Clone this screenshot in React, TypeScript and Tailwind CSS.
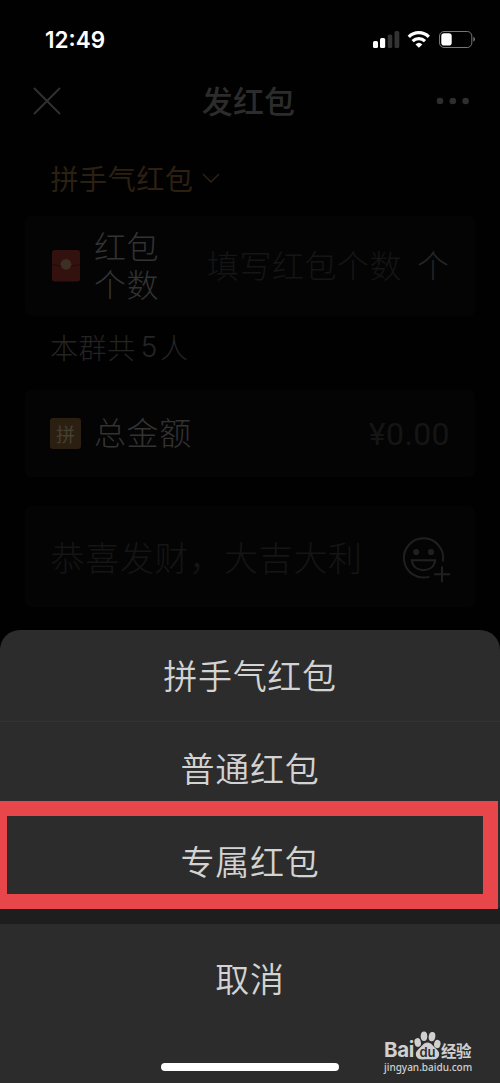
import React from "react";

function StatusBar() {
  return (
    <div className="flex h-[78px] items-center justify-between pl-[45px] pr-[25px]">
      <div className="pt-[2px] font-['Inter'] text-[22.5px] font-semibold leading-none text-white">12:49</div>
      <svg className="shrink-0" width="103" height="20" viewBox="372 29 103 20" fill="none">
        <rect x="373" y="41" width="5" height="7" rx="1.5" fill="#fff" />
        <rect x="380" y="38" width="5.2" height="10" rx="1.5" fill="#fff" />
        <rect x="387.7" y="34.5" width="4.6" height="13.5" rx="1.5" fill="#333" />
        <rect x="394.5" y="31" width="4.8" height="17" rx="1.5" fill="#333" />
        <path d="M408.8 36.8a14.2 14.2 0 0 1 20 0" stroke="#fff" strokeWidth="3.3" />
        <path d="M412.6 41.2a9 9 0 0 1 12.4 0" stroke="#fff" strokeWidth="3.2" />
        <path d="M415.5 44.4a5 5 0 0 1 6.8 0L418.9 47.8Z" fill="#fff" />
        <rect x="439.5" y="31.5" width="32.3" height="16" rx="4.5" stroke="#777" strokeWidth="1" />
        <rect x="441.3" y="33.2" width="10.4" height="12.4" rx="2.8" fill="#fff" />
        <path d="M473.3 36.8q1.7.8 1.7 2.5t-1.7 2.5Z" fill="#777" />
      </svg>
    </div>
  );
}

function NavBar() {
  return (
    <div className="flex h-[46px] items-center justify-between pl-[33px] pr-[30px]">
      <svg width="28" height="28" viewBox="0 0 28 28" stroke="#303030" strokeWidth="2">
        <path d="M1 1L27 27M27 1L1 27" />
      </svg>
      <h1 className="pb-[3px] text-[31px] font-medium leading-none tracking-[0.2px] text-[#2c2c2c]">发红包</h1>
      <svg width="34" height="8" viewBox="0 0 34 8" fill="#2e2e2e">
        <circle cx="4" cy="4" r="3.3" />
        <circle cx="16.8" cy="4" r="3.3" />
        <circle cx="29.6" cy="4" r="3.3" />
      </svg>
    </div>
  );
}

function Packet() {
  return (
    <svg className="shrink-0" width="28" height="32" viewBox="0 0 28 32">
      <rect width="28" height="31.5" rx="2.5" fill="#32110e" />
      <path d="M0 14.5Q14 18 28 14.5" stroke="#230b09" fill="none" />
      <circle cx="14" cy="14.3" r="5.4" fill="#3c3024" />
    </svg>
  );
}

function Smiley() {
  return (
    <svg className="mt-[6px]" width="48" height="46" viewBox="402 537 48 46" fill="none" stroke="#202020" strokeWidth="2">
      <path d="M442.8 561.5A19.6 19.6 0 1 0 429.5 576.6" />
      <circle cx="416.2" cy="552" r="3.1" fill="#202020" stroke="none" />
      <circle cx="431" cy="552" r="3.1" fill="#202020" stroke="none" />
      <path d="M411.8 560.2H435.2C434.5 566.5 429.8 570.2 423.5 570.2S412.5 566.5 411.8 560.2Z" />
      <path d="M442 566.5V582.3M434 574.3H450" />
    </svg>
  );
}

function Watermark() {
  return (
    <div className="absolute bottom-[9px] left-[384px] flex w-[92px] flex-col text-[#d0d0d0]">
      <div className="flex h-[29px] items-end">
        <span className="w-[30px] font-['Inter'] text-[20.5px] font-bold leading-[20px] tracking-[-0.3px]">Bai</span>
        <svg className="shrink-0" width="27" height="29" viewBox="0 0 27 29" fill="#d0d0d0">
          <ellipse cx="3.7" cy="11.5" rx="3.2" ry="4.4" transform="rotate(-10 3.7 11.5)" />
          <ellipse cx="10" cy="5.3" rx="3.3" ry="4.8" />
          <ellipse cx="18" cy="5.6" rx="3.3" ry="4.7" transform="rotate(10 18 5.6)" />
          <ellipse cx="23.3" cy="13" rx="3.2" ry="4.2" transform="rotate(12 23.3 13)" />
          <path d="M13.5 11.5C9.6 11.5 8 15.3 4.9 17.7C1.7 20.5 1.2 23.2 2.5 25.8C4.7 29.5 9.8 28.2 13.5 28.2S22.3 29.5 24.5 25.8C25.8 23.2 25.3 20.5 22.1 17.7C19 15.3 17.4 11.5 13.5 11.5Z" />
          <text x="13.5" y="26" textAnchor="middle" fontFamily="Inter" fontSize="13" fontWeight="600" fill="#2c2c2c">du</text>
        </svg>
        <span className="whitespace-nowrap text-[15.5px] font-bold leading-[20px] tracking-[-0.5px]">经验</span>
      </div>
      <span className="whitespace-nowrap font-['Noto_Sans'] text-[10px] font-medium leading-[14px]">jingyan.baidu.com</span>
    </div>
  );
}

const option = "flex shrink-0 items-center justify-center pb-[1px] text-[34px] font-[350] leading-none tracking-[0.7px] text-[#d3d3d3]";

export default function App() {
  return (
    <div className="relative flex h-[1083px] w-[500px] flex-col overflow-hidden bg-[#010101] font-['Noto_Sans_CJK_SC',sans-serif]">
      <StatusBar />
      <NavBar />
      <main className="flex h-[506px] flex-col px-[25px] font-light">
        <div className="mt-[32px] flex h-[44px] items-center pl-[25.5px] text-[28px] font-normal leading-none tracking-[0.6px] text-[#2b2011]">
          <span className="pb-px">拼手气红包</span>
          <svg className="ml-[8px]" width="18" height="10" viewBox="0 0 18 10" fill="none" stroke="#2b2011" strokeWidth="1.6">
            <path d="M1 1L9 9L17 1" />
          </svg>
        </div>
        <section className="mt-[16px] flex h-[100px] shrink-0 items-center rounded-md bg-[#040404] pl-[27px] pr-[26px]">
          <Packet />
          <div className="ml-[14px] w-[66px] pb-[4px] text-[32px] leading-[38px] tracking-[0.4px] text-[#333]">红包个数</div>
          <div className="ml-auto flex gap-[15px] whitespace-nowrap pb-[4px] text-[32px] leading-none">
            <span className="tracking-[0.5px] text-[#151515]">填写红包个数</span>
            <span className="text-[#262626]">个</span>
          </div>
        </section>
        <p className="flex h-[74px] shrink-0 items-center pb-[13px] pl-[25px] text-[28px] leading-none tracking-[0.6px] text-[#242424]">
          本群共<span className="ml-[5px] mr-[2px] font-['Inter'] font-light">5</span>人
        </p>
        <section className="flex h-[87px] shrink-0 items-center rounded-md bg-[#040404] pl-[25px] pr-[25px]">
          <span className="flex size-[31px] items-center justify-center rounded-[3px] bg-[#2b1f11] pb-px text-[19px] font-normal leading-none text-[#464034]">拼</span>
          <span className="ml-[13px] pb-[5px] text-[32px] leading-none tracking-[0.6px] text-[#333]">总金额</span>
          <span className="ml-auto font-['Roboto'] text-[32px] font-normal leading-none tracking-[0.4px] text-[#151515]">¥0.00</span>
        </section>
        <section className="mt-[29px] flex h-[101px] shrink-0 items-center justify-between rounded-md bg-[#040404] pl-[25.5px] pr-[25px]">
          <span className="whitespace-nowrap text-[34px] leading-none tracking-[0.7px] text-[#151515]">恭喜发财，大吉大利</span>
          <Smiley />
        </section>
      </main>
      <div className="flex h-[453px] shrink-0 flex-col overflow-hidden rounded-t-[20px] bg-[#2c2c2c]">
        <button className={`${option} h-[92px] border-b border-[#323232]`}>拼手气红包</button>
        <button className={`${option} h-[93px]`}>普通红包</button>
        <button className={`${option} h-[93px]`}>专属红包</button>
        <div className="h-[16px] shrink-0 bg-[#1e1e1e]" />
        <button className={`${option} h-[108px]`}>取消</button>
        <div className="mx-auto mt-[31px] h-[8px] w-[178px] shrink-0 rounded-full bg-white" />
      </div>
      <div className="absolute left-[-7px] top-[801px] h-[108px] w-[505px] border-[15px] border-l-[14px] border-[#e8464b]" />
      <Watermark />
    </div>
  );
}
